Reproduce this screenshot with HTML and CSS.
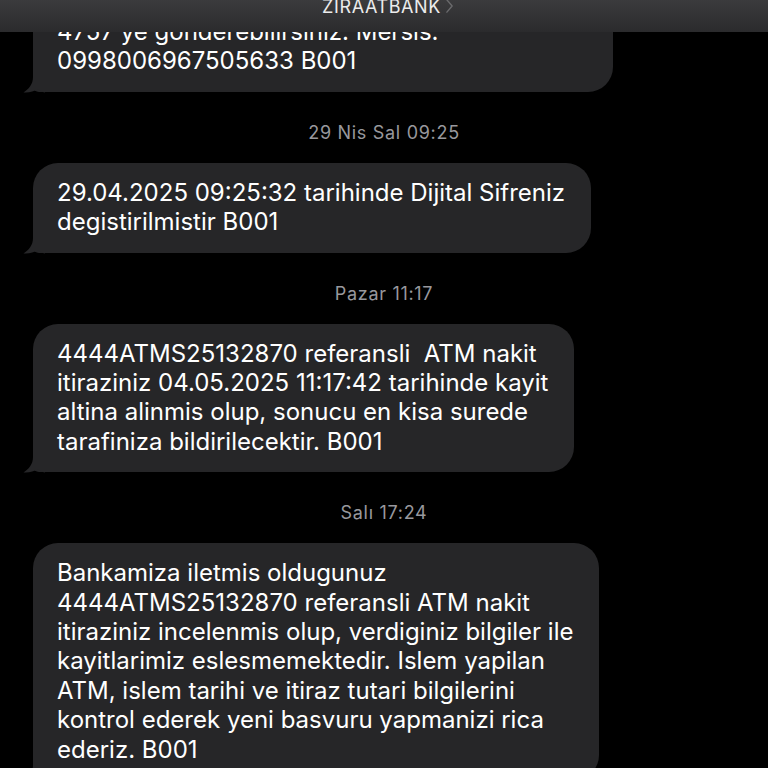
FILE: index.html
```html
<!DOCTYPE html>
<html lang="tr">
<head>
<meta charset="utf-8">
<title>ZIRAATBANK</title>
<link rel="stylesheet" href="styles.css">
</head>
<body>
<div class="screen">
  <div class="thread">
    <div class="bubble first">
      <p>4757 ye gonderebilirsiniz. Mersis:<br>0998006967505633 B001</p>
      <svg class="tail" viewBox="0 0 22 22" width="22" height="22"><path d="M10 0 L10 6 C10 13 6 18 0.5 21.5 C6 22 11 20.5 15 18 C17 19.5 19 21 22 21.5 L22 0 Z"/></svg>
    </div>
    <div class="stamp">29 Nis Sal 09:25</div>
    <div class="bubble">
      <p>29.04.2025 09:25:32 tarihinde Dijital Sifreniz<br>degistirilmistir B001</p>
      <svg class="tail" viewBox="0 0 22 22" width="22" height="22"><path d="M10 0 L10 6 C10 13 6 18 0.5 21.5 C6 22 11 20.5 15 18 C17 19.5 19 21 22 21.5 L22 0 Z"/></svg>
    </div>
    <div class="stamp">Pazar 11:17</div>
    <div class="bubble">
      <p>4444ATMS25132870 referansli&nbsp; ATM nakit<br>itiraziniz 04.05.2025 11:17:42 tarihinde kayit<br>altina alinmis olup, sonucu en kisa surede<br>tarafiniza bildirilecektir. B001</p>
      <svg class="tail" viewBox="0 0 22 22" width="22" height="22"><path d="M10 0 L10 6 C10 13 6 18 0.5 21.5 C6 22 11 20.5 15 18 C17 19.5 19 21 22 21.5 L22 0 Z"/></svg>
    </div>
    <div class="stamp">Salı 17:24</div>
    <div class="bubble">
      <p>Bankamiza iletmis oldugunuz<br>4444ATMS25132870 referansli ATM nakit<br>itiraziniz incelenmis olup, verdiginiz bilgiler ile<br>kayitlarimiz eslesmemektedir. Islem yapilan<br>ATM, islem tarihi ve itiraz tutari bilgilerini<br>kontrol ederek yeni basvuru yapmanizi rica<br>ederiz. B001</p>
      <svg class="tail" viewBox="0 0 22 22" width="22" height="22"><path d="M10 0 L10 6 C10 13 6 18 0.5 21.5 C6 22 11 20.5 15 18 C17 19.5 19 21 22 21.5 L22 0 Z"/></svg>
    </div>
  </div>
  <header class="topbar">
    <span class="title">ZIRAATBANK</span>
    <svg class="chevron" viewBox="0 0 10 16" width="9" height="14"><polyline points="2,1 8,8 2,15" fill="none" stroke="#6a6a6c" stroke-width="1.6" stroke-linecap="round" stroke-linejoin="round"/></svg>
  </header>
</div>
</body>
</html>
```
FILE: styles.css
```css
* { box-sizing: border-box; }
html, body {
  margin: 0;
  padding: 0;
  background: #000;
}
body {
  font-family: Inter, "Noto Sans", "Liberation Sans", sans-serif;
  color: #fff;
}
.screen {
  position: relative;
  width: 768px;
  height: 768px;
  overflow: hidden;
  background: #000;
}
.topbar {
  position: absolute;
  top: 0;
  left: 0;
  right: 0;
  height: 32px;
  background: linear-gradient(#3b3b3d, #2b2b2d);
  display: flex;
  justify-content: center;
  align-items: flex-start;
  gap: 4px;
  padding-left: 8px;
}
.title {
  font-size: 18px;
  line-height: 18px;
  margin-top: -2px;
  color: #ececec;
  letter-spacing: 0.6px;
}
.chevron {
  margin-top: -1px;
}
.thread {
  display: flex;
  flex-direction: column;
  align-items: flex-start;
  padding: 2px 0 0 33px;
}
.bubble {
  position: relative;
  background: #262628;
  border-radius: 25px;
  border-bottom-left-radius: 6px;
  padding: 15px 26px 16px 24px;
}
.bubble.first {
  min-width: 580px;
}
.bubble p {
  margin: 0;
  font-size: 24px;
  line-height: 29.4px;
  white-space: nowrap;
}
.tail {
  position: absolute;
  left: -10px;
  bottom: -1px;
  fill: #262628;
}
.stamp {
  align-self: stretch;
  margin-left: -33px;
  text-align: center;
  font-size: 18px;
  line-height: 22px;
  letter-spacing: 0.7px;
  color: #98989d;
  margin-top: 30px;
  margin-bottom: 19px;
}
```
